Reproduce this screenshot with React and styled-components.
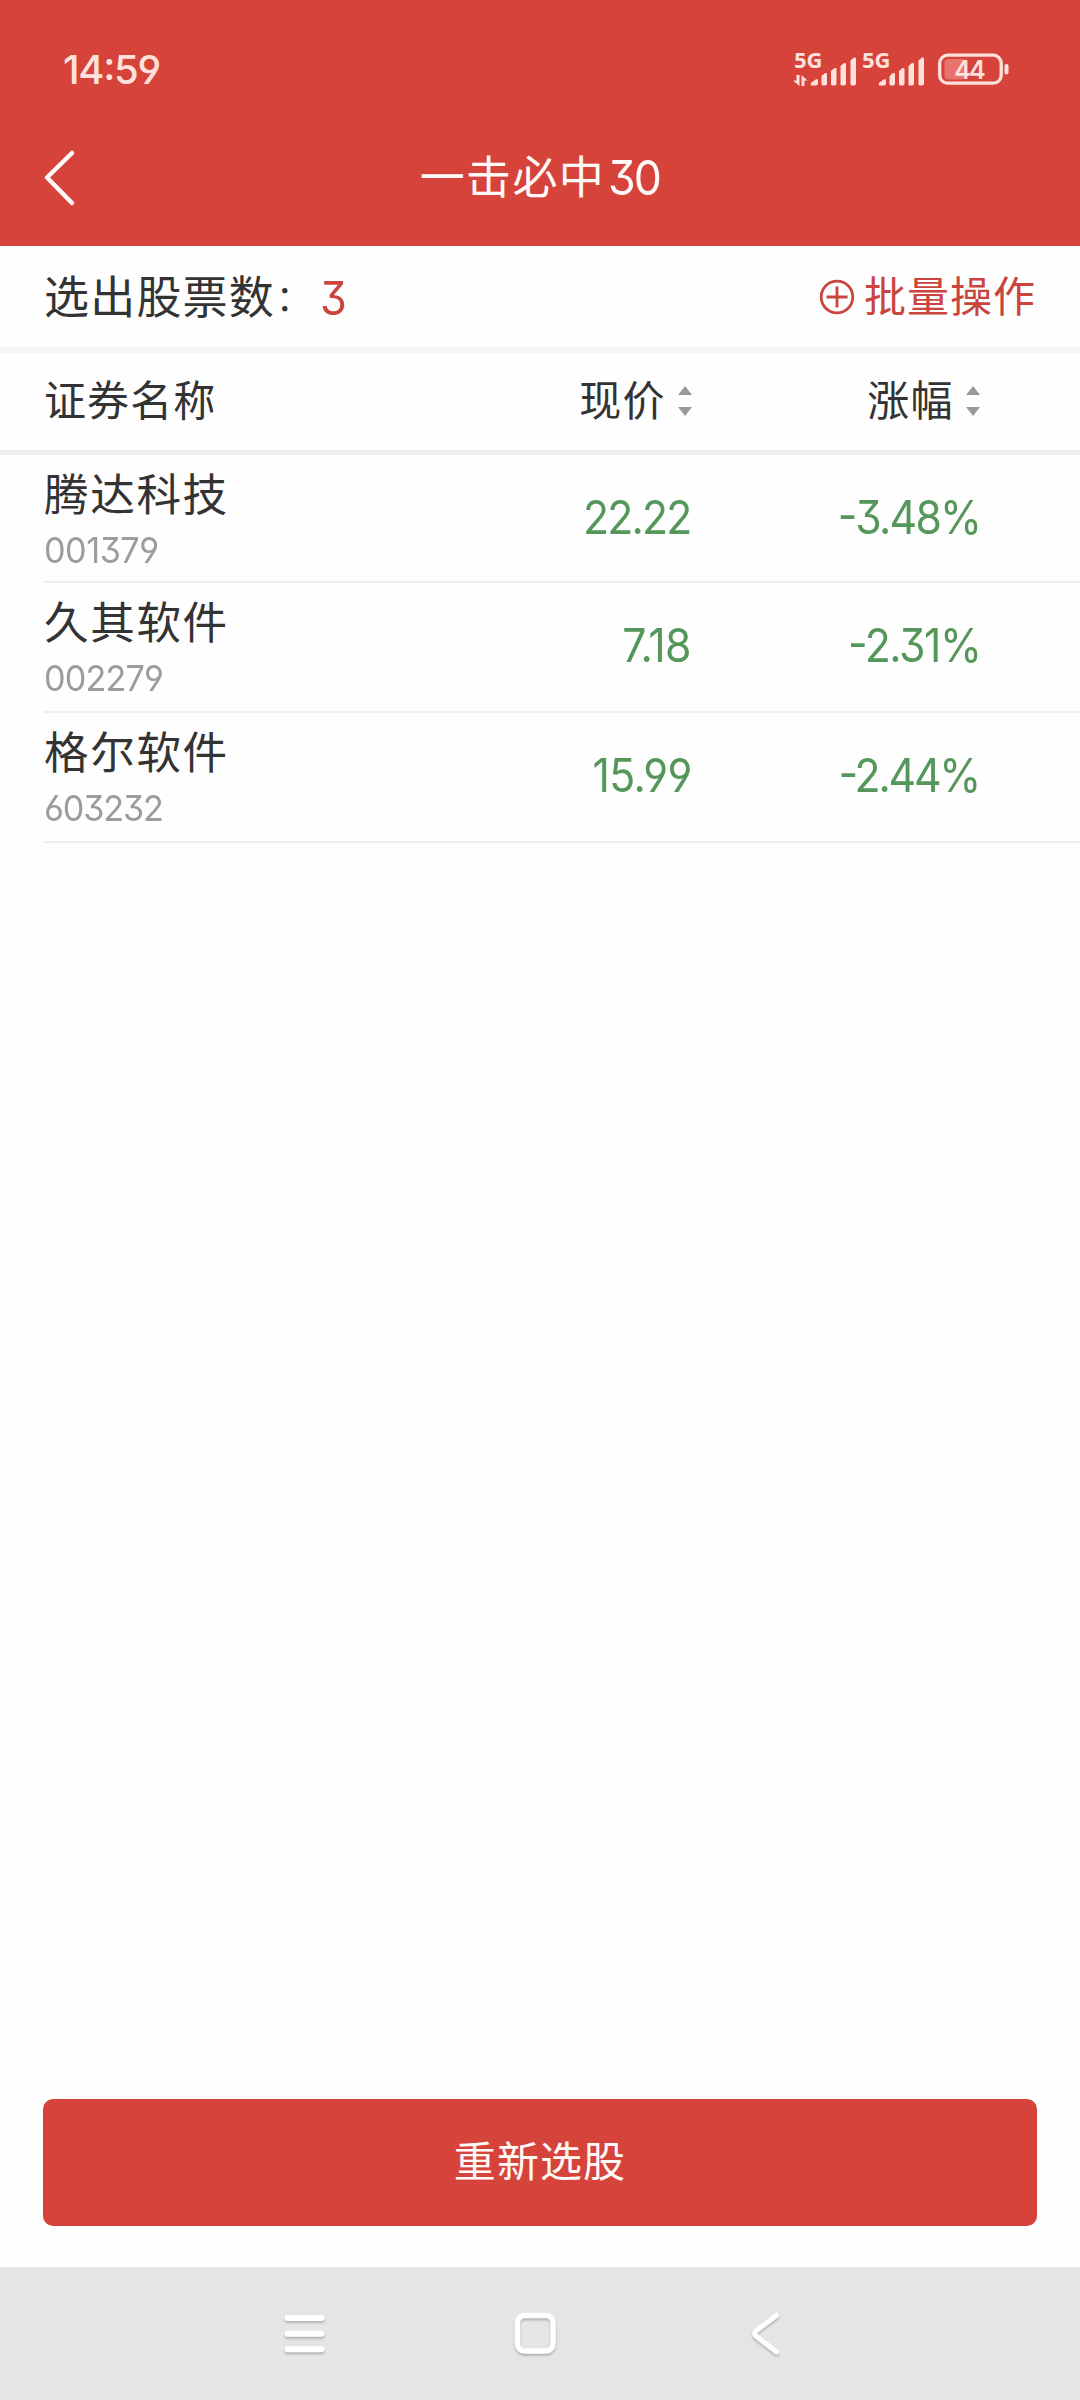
import styled, { createGlobalStyle } from "styled-components";

const colors = {
  primary: "#d6433b",
  accent: "#c9453d",
  white: "#fffaf8",
  status: "#ffe1dc",
  textPrimary: "#333333",
  textMuted: "#9c9c9c",
  fall: "#55975a",
  line: "#eeeeee",
  band: "#f5f5f5",
  nav: "#e5e5e5",
};

const GlobalStyle = createGlobalStyle`
  * {
    box-sizing: border-box;
  }

  body {
    margin: 0;
    background: #fefefe;
    font-family: Inter, "Noto Sans CJK SC", sans-serif;
    font-feature-settings: "cv03", "cv04", "cv09", "case";
    color: ${colors.textPrimary};
  }
`;

const Screen = styled.div`
  display: flex;
  flex-direction: column;
  width: 1080px;
  height: 2400px;
  overflow: hidden;
`;

const Header = styled.header`
  height: 246px;
  background: ${colors.primary};
`;

const StatusBar = styled.div`
  display: flex;
  align-items: center;
  justify-content: space-between;
  height: 110px;
  padding: 29px 70px 0 63px;
  color: ${colors.status};
`;

const Clock = styled.span`
  font-size: 40px;
  line-height: 48px;
  font-weight: 550;
  letter-spacing: -1.3px;
`;

const StatusIcons = styled.div`
  display: flex;
  height: 34px;
`;

const Signal = styled.div`
  width: 68px;
  height: 34px;
`;

const SignalLabel = styled.div`
  height: 14px;
  font-family: "Noto Sans", sans-serif;
  font-size: 22px;
  line-height: 12px;
  font-weight: 700;
  letter-spacing: -0.3px;
`;

const SignalBars = styled.svg`
  display: block;
  margin: -13px 0 0 -2px;
`;

const Battery = styled.div`
  display: grid;
  width: 72px;
  height: 34px;
  margin-left: 8px;

  > * {
    grid-area: 1 / 1;
  }
`;

const BatteryLevel = styled.span`
  width: 62px;
  text-align: center;
  font-size: 25px;
  line-height: 35px;
  font-weight: 600;
  letter-spacing: -2px;
`;

const TitleBar = styled.div`
  display: grid;
  grid-template-columns: 120px 1fr 120px;
  align-items: center;
  height: 136px;
`;

const BackButton = styled.button`
  display: flex;
  width: 80px;
  height: 80px;
  padding: 10px 0 0 40px;
  border: none;
  background: none;
  cursor: pointer;
`;

const Title = styled.h1`
  display: flex;
  justify-content: center;
  margin: 0;
  font-size: 45px;
  line-height: 60px;
  font-weight: 400;
  letter-spacing: 1.4px;
  color: ${colors.white};
`;

// 数字字形收窄
const TitleNumber = styled.span`
  margin: 0 -4px 0 3px;
  font-size: 48px;
  letter-spacing: -2px;
  transform: scaleX(0.93);
  transform-origin: left;
`;

const Summary = styled.section`
  display: flex;
  align-items: center;
  justify-content: space-between;
  height: 107px;
  padding: 0 44px;
  border-bottom: 6px solid ${colors.band};
`;

const SummaryLabel = styled.div`
  display: flex;
  align-items: center;
  padding-top: 2px;
  font-size: 45px;
  line-height: 60px;
  letter-spacing: 1.2px;
`;

const Colon = styled.span`
  width: 46px;
  padding-left: 1px;
  font-size: 35px;
`;

const SummaryCount = styled.span`
  margin-left: -1px;
  font-size: 47px;
  color: ${colors.accent};
  transform: scaleX(0.92);
  transform-origin: left;
`;

const BatchButton = styled.button`
  display: flex;
  align-items: center;
  gap: 9px;
  padding: 0;
  border: none;
  background: none;
  font: inherit;
  font-size: 42px;
  line-height: 60px;
  letter-spacing: 1px;
  color: ${colors.accent};
  cursor: pointer;
`;

const TableHead = styled.div`
  display: grid;
  grid-template-columns: 400px 247.5px 288px;
  align-items: center;
  height: 102px;
  padding: 0 44px 1px;
  border-bottom: 5px solid ${colors.line};
  font-size: 42px;
  line-height: 60px;
  letter-spacing: 1.1px;
`;

const SortHead = styled.div`
  display: flex;
  align-items: center;
  justify-content: flex-end;
  gap: 12px;
`;

const List = styled.div`
  flex: 1;
  padding-left: 43px;
`;

const Row = styled.div`
  display: grid;
  grid-template-columns: 400px 248px 290px;
  height: 130px;
  border-bottom: 2px solid ${colors.line};

  &:first-child {
    height: 128px;
  }
`;

const Stock = styled.div`
  display: flex;
  flex-direction: column;
  align-items: flex-start;
  justify-content: flex-end;
  padding: 0 0 12px 1px;
`;

const StockName = styled.span`
  font-size: 44.6px;
  line-height: 60px;
  letter-spacing: 1.6px;
`;

const StockCode = styled.span`
  margin-top: 2px;
  font-size: 36px;
  line-height: 46px;
  letter-spacing: ${(props) => props.$spacing}px;
  color: ${colors.textMuted};
  transform: scaleX(0.95);
  transform-origin: left;
`;

const Quote = styled.span`
  align-self: end;
  justify-self: end;
  padding-bottom: 6px;
  margin-right: ${(props) => -props.$spacing - 1}px;
  font-size: 46px;
  line-height: 124px;
  letter-spacing: ${(props) => props.$spacing}px;
  color: ${colors.fall};
  transform: scaleX(0.93);
  transform-origin: right;
`;

const Footer = styled.footer`
  padding: 0 43px 41px;
`;

const ReselectButton = styled.button`
  display: block;
  width: 100%;
  height: 127px;
  padding: 0 0 2px;
  border: none;
  border-radius: 10px;
  background: ${colors.primary};
  font: inherit;
  font-size: 42px;
  line-height: 60px;
  letter-spacing: 1.1px;
  color: ${colors.white};
  cursor: pointer;
`;

const NavBar = styled.nav`
  display: flex;
  justify-content: space-between;
  height: 133px;
  padding: 42px 293px 0 276px;
  background: ${colors.nav};

  svg {
    filter: drop-shadow(0 2px 1px rgba(0, 0, 0, 0.22));
  }
`;

const stocks = [
  { name: "腾达科技", code: "001379", price: "22.22", change: "-3.48%", spacing: [-0.5, -2, -1.9] },
  { name: "久其软件", code: "002279", price: "7.18", change: "-2.31%", spacing: [-0.9, -0.7, -1.6] },
  { name: "格尔软件", code: "603232", price: "15.99", change: "-2.44%", spacing: [-1.2, -0.6, -2.4] },
];

function SignalIcon({ data }) {
  return (
    <Signal>
      <SignalLabel>5G</SignalLabel>
      <SignalBars width="68" height="34" viewBox="0 0 68 34" fill="currentColor">
        {data && <path d="M4.500 21H7.500v11L1 26.500h3.500zM9.500 32V21l6 5.500H12.500v5.500z" />}
        <path d="M19 31.500q-1-3 2-4l3-2.200q2-.6 2 1.200v3q0 2-2 2h-4z" />
        <path d="M29.500 22l3.500-3q2-.5 2 1v9.500q0 2-2 2h-2q-1.500 0-1.500-1.500z" />
        <path d="M39 17l3.500-3q2-.5 2 1v14.500q0 2-2 2h-2q-1.500 0-1.500-1.500z" />
        <path d="M48.500 12l3.500-3q2-.5 2 1v19.500q0 2-2 2h-2q-1.500 0-1.500-1.500z" />
        <path d="M58.500 6.500l3.500-3q2-.5 2 1v25q0 2-2 2h-2q-1.500 0-1.500-1.500z" />
      </SignalBars>
    </Signal>
  );
}

function SortIcon() {
  return (
    <svg width="14" height="30" viewBox="0 0 14 30" fill="#999">
      <path d="M7 0l7 9H0zM7 30l7-9H0z" />
    </svg>
  );
}

export default function App() {
  return (
    <Screen>
      <GlobalStyle />

      <Header>
        <StatusBar>
          <Clock>14:59</Clock>
          <StatusIcons>
            <SignalIcon data />
            <SignalIcon />
            <Battery>
              <svg width="72" height="34" viewBox="0 0 72 34" fill="none">
                <rect x="6.500" y="6" width="21" height="20.500" rx="4" fill="#e9736d" />
                <rect x="1.700" y="2.200" width="61.500" height="28" rx="8" stroke="currentColor" strokeWidth="3.300" />
                <rect x="66.500" y="11" width="4" height="10.500" rx="2" fill="currentColor" />
              </svg>
              <BatteryLevel>44</BatteryLevel>
            </Battery>
          </StatusIcons>
        </StatusBar>

        <TitleBar>
          <BackButton type="button" aria-label="返回">
            <svg width="40" height="60" viewBox="0 0 40 60" fill="none">
              <path
                d="M32 5L7 29.500L32 55"
                stroke={colors.white}
                strokeWidth="4.500"
                strokeLinecap="round"
                strokeLinejoin="round"
              />
            </svg>
          </BackButton>
          <Title>
            一击必中<TitleNumber>30</TitleNumber>
          </Title>
        </TitleBar>
      </Header>

      <Summary>
        <SummaryLabel>
          选出股票数<Colon>：</Colon>
          <SummaryCount>3</SummaryCount>
        </SummaryLabel>
        <BatchButton type="button">
          <svg width="36" height="36" viewBox="0 0 36 36" fill="none" stroke="currentColor" strokeWidth="2.800">
            <circle cx="18" cy="18" r="15.800" />
            <path d="M18 7.500v21M7.500 18h21" />
          </svg>
          批量操作
        </BatchButton>
      </Summary>

      <TableHead>
        <span>证券名称</span>
        <SortHead>
          现价
          <SortIcon />
        </SortHead>
        <SortHead>
          涨幅
          <SortIcon />
        </SortHead>
      </TableHead>

      <List>
        {stocks.map((stock) => (
          <Row key={stock.code}>
            <Stock>
              <StockName>{stock.name}</StockName>
              <StockCode $spacing={stock.spacing[0]}>{stock.code}</StockCode>
            </Stock>
            <Quote $spacing={stock.spacing[1]}>{stock.price}</Quote>
            <Quote $spacing={stock.spacing[2]}>{stock.change}</Quote>
          </Row>
        ))}
      </List>

      <Footer>
        <ReselectButton type="button">重新选股</ReselectButton>
      </Footer>

      {/* 系统导航栏 */}
      <NavBar>
        <svg width="56" height="56" viewBox="0 0 56 56" stroke="#fff" strokeWidth="6" strokeLinecap="round">
          <path d="M11.500 9h34M11.500 24.700h34M11.500 40.300h34" />
        </svg>
        <svg width="56" height="56" viewBox="0 0 56 56" fill="none" stroke="#fff" strokeWidth="5.500">
          <rect x="13.500" y="6.500" width="35.500" height="35.500" rx="7" />
        </svg>
        <svg width="56" height="56" viewBox="0 0 56 56" fill="none" stroke="#fff" strokeWidth="5" strokeLinecap="round">
          <path d="M45.500 6.500L25 22Q22.500 24.500 25 27L45.500 43" />
        </svg>
      </NavBar>
    </Screen>
  );
}
